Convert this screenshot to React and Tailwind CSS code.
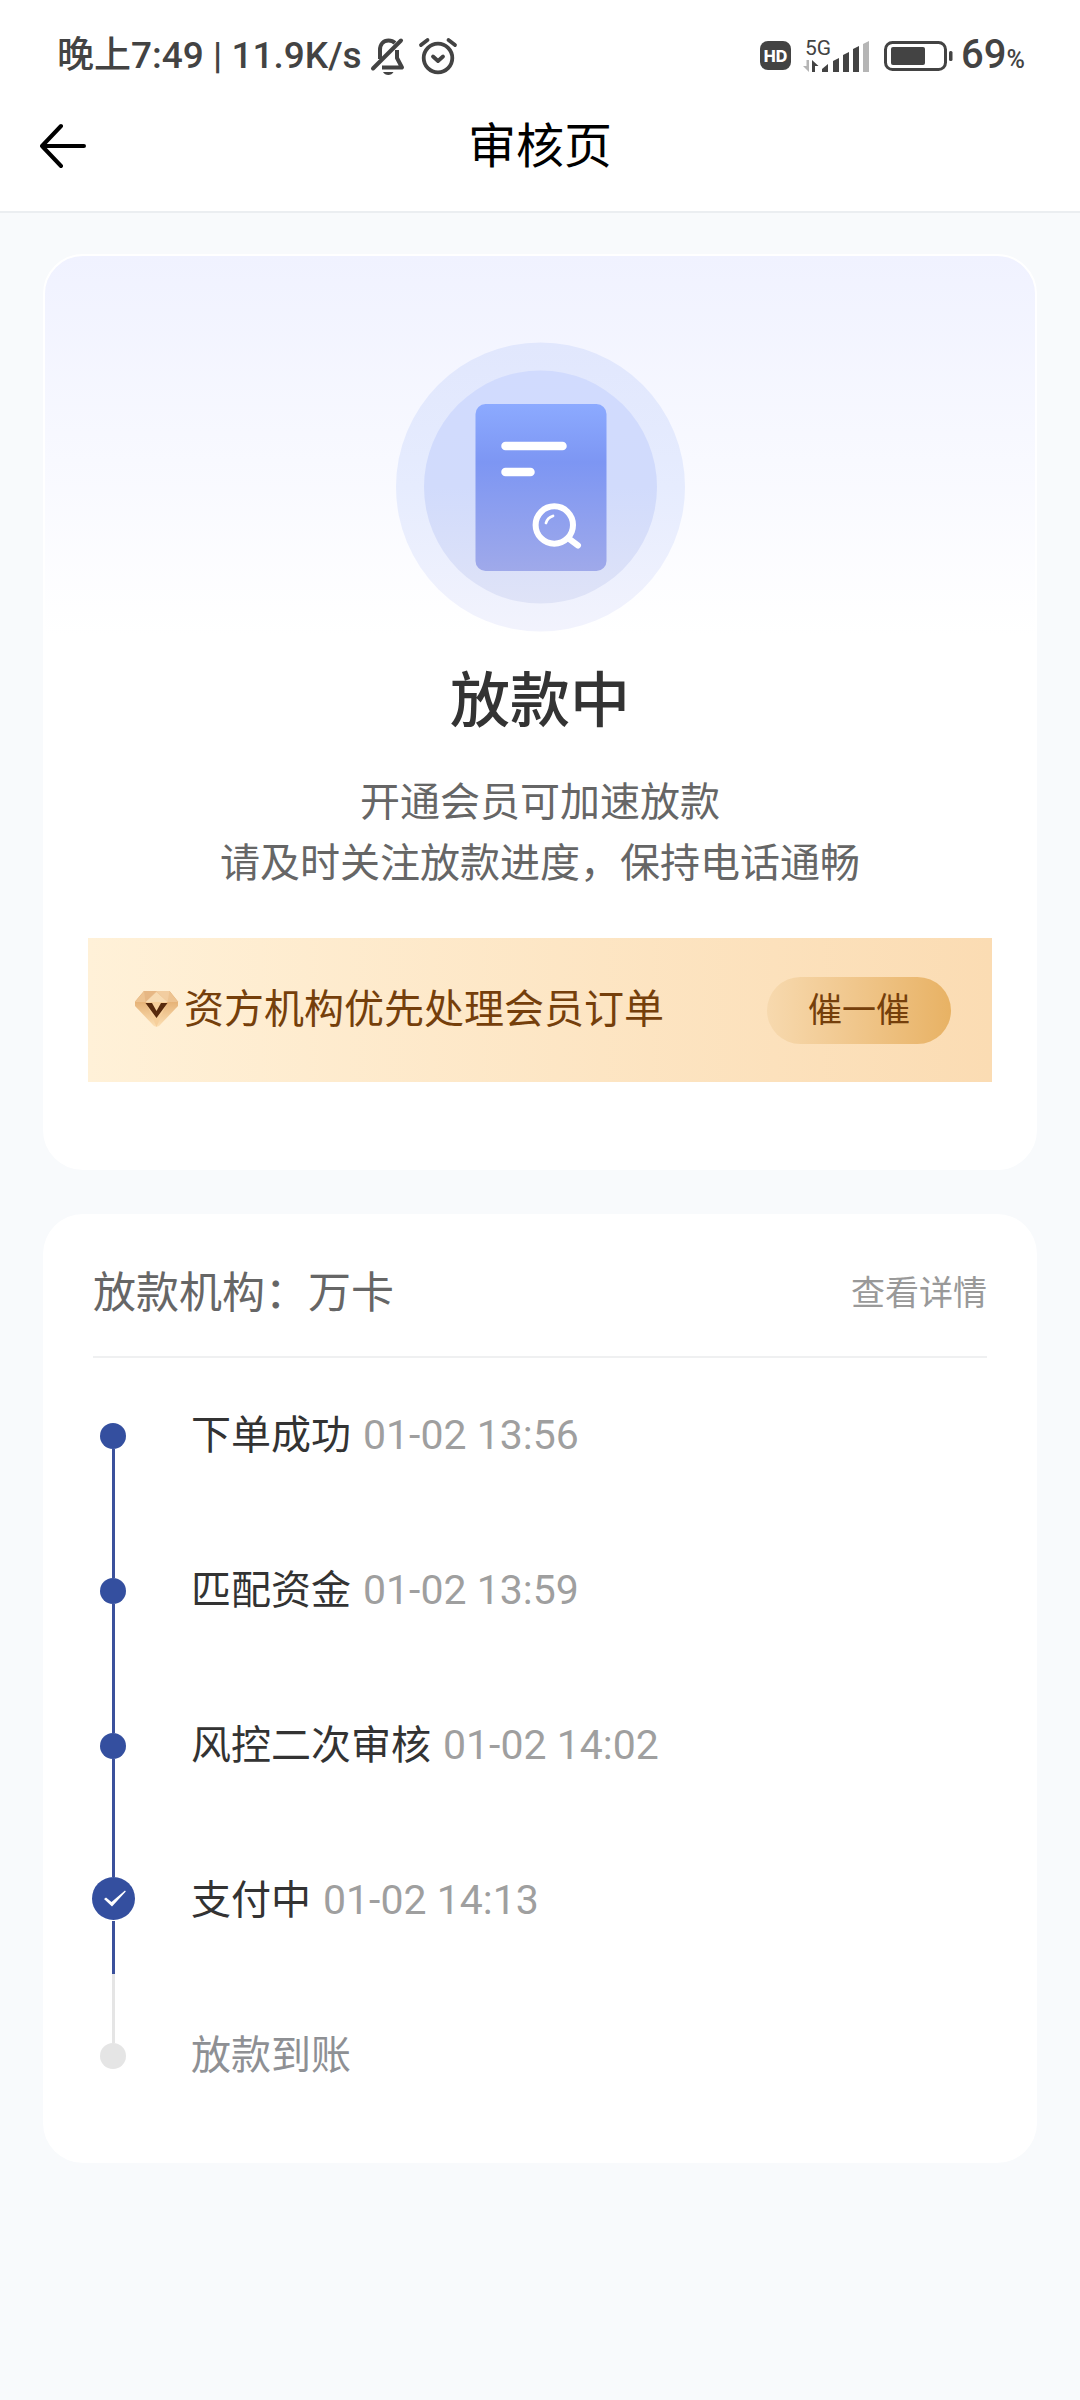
const CJK = 'font-["Roboto","Noto_Sans_CJK_SC",sans-serif]';

function BellOffIcon() {
  return (
    <svg className="h-[38px] w-[36px]" viewBox="0 0 36 38" fill="none" stroke="#434343" aria-hidden="true">
      <path d="M10 22V13c0-6 3.500-9.500 8.500-9.500 3 0 5 1 6.500 2.500" strokeWidth="4" />
      <path d="M3 31.500 31 3.500" strokeWidth="4" strokeLinecap="round" />
      <path d="M27 13v8l5 9.500H12" strokeWidth="4" strokeLinejoin="round" />
      <path d="M13 35h10.500c-1 2-3 3-5.200 3s-4.300-1-5.300-3Z" fill="#434343" stroke="none" />
    </svg>
  );
}

function AlarmIcon() {
  return (
    <svg className="h-[38px] w-[40px]" viewBox="0 0 40 38" fill="none" stroke="#434343" strokeWidth="3.800" aria-hidden="true">
      <circle cx="20" cy="21" r="14.300" />
      <path d="m15 19.500 5 4.500 5-4.500" strokeLinecap="round" strokeLinejoin="round" />
      <path d="M3 8 9.500 3M37 8l-6.500-5" strokeLinecap="round" />
    </svg>
  );
}

function SignalIcon() {
  return (
    <svg className="h-[52px] w-[66px]" viewBox="0 -8 66 52" fill="#434343" aria-hidden="true">
      <text x="2" y="17" fontSize="21" fontFamily="Roboto, sans-serif">5G</text>
      <path d="M3.500 22H6v12L0 28h3.500Z" fill="#b5b5b5" />
      <path d="M9 34V22l6.500 6H12v6Z" />
      <path d="M19 34v-3l6-5v8Z" />
      <path d="M30 34V23l6-3v14Z" />
      <path d="M40 34V17l6-3v20Z" />
      <path d="M50 34V11l6-3v26Z" />
      <path d="M60 34V6l6-3v31Z" fill="#b5b5b5" />
    </svg>
  );
}

function BatteryIcon() {
  return (
    <svg className="h-[30px] w-[69px]" viewBox="0 0 69 30" fill="none" aria-hidden="true">
      <rect x="1.500" y="1.500" width="60" height="27" rx="7" stroke="#434343" strokeWidth="3" />
      <rect x="7" y="6" width="34" height="18" rx="2" fill="#434343" />
      <rect x="65" y="10" width="3.500" height="10" rx="1.500" fill="#434343" />
    </svg>
  );
}

function StatusBar() {
  return (
    <div className="flex h-[111px] items-center justify-between pr-[55px] pl-[57px] text-[#434343]">
      <div className="flex items-center">
        <span className="text-[37px] leading-[44px] font-medium whitespace-pre">晚上7:49 | 11.9K/s</span>
        <span className="ml-2 flex items-center gap-3">
          <BellOffIcon />
          <AlarmIcon />
        </span>
      </div>
      <div className="flex items-center">
        <span className="flex h-[29px] w-[31px] items-center justify-center rounded-lg bg-[#434343] font-[Inter] text-[16px] font-extrabold text-white">HD</span>
        <span className="ml-3 flex items-center gap-[15px]">
          <SignalIcon />
          <BatteryIcon />
        </span>
        <span className="ml-2 flex items-baseline pt-1 text-[40px] leading-[44px] font-medium">
          69<span className="text-[25px]">%</span>
        </span>
      </div>
    </div>
  );
}

function Header() {
  return (
    <header className="border-b-2 border-[#ebeef1] bg-white">
      <StatusBar />
      <div className="grid h-[100px] grid-cols-3 items-start px-10">
        <button type="button" aria-label="返回" className="mt-[11px] w-[48px]">
          <svg className="h-[48px] w-[48px]" viewBox="0 0 48 48" fill="none" stroke="#000" strokeWidth="4" strokeLinecap="round" strokeLinejoin="round" aria-hidden="true">
            <path d="M21 4 2 24l19 20M2 24h42" />
          </svg>
        </button>
        <h1 className="text-center text-[48px] leading-[72px] text-black">审核页</h1>
      </div>
    </header>
  );
}

function ReviewIllustration() {
  return (
    <svg className="h-[290px] w-[290px]" viewBox="0 0 290 290" fill="none" aria-hidden="true">
      <defs>
        <linearGradient id="outer" x1="0" y1="0" x2="0" y2="1">
          <stop offset="0" stopColor="#e1e7fd" />
          <stop offset="0.500" stopColor="#e6ecfe" />
          <stop offset="1" stopColor="#f2f3fd" />
        </linearGradient>
        <linearGradient id="inner" x1="0" y1="0" x2="0" y2="1">
          <stop offset="0" stopColor="#d1dbfe" />
          <stop offset="0.500" stopColor="#d1dbfc" />
          <stop offset="1" stopColor="#dfe3f7" />
        </linearGradient>
        <linearGradient id="sheet" x1="0" y1="0" x2="0" y2="1">
          <stop offset="0" stopColor="#8caaff" />
          <stop offset="0.350" stopColor="#7d96f3" />
          <stop offset="1" stopColor="#9fa9ea" />
        </linearGradient>
      </defs>
      <circle cx="145.500" cy="145" r="144.500" fill="url(#outer)" />
      <circle cx="145.500" cy="145" r="116.500" fill="url(#inner)" />
      <rect x="80.500" y="62" width="131" height="167" rx="10" fill="url(#sheet)" />
      <path d="M110.500 104h57M110.500 130h25" stroke="#fff" strokeWidth="8.500" strokeLinecap="round" />
      <circle cx="159.300" cy="183" r="18.700" stroke="#fff" strokeWidth="6" />
      <path d="m175 197.500 8 6" stroke="#fff" strokeWidth="6" strokeLinecap="round" />
      <path d="M151 181c1-4 4-6 7-7" stroke="#fff" strokeWidth="2.800" strokeLinecap="round" />
    </svg>
  );
}

function DiamondIcon() {
  return (
    <svg className="h-[40px] w-[44px]" viewBox="0 0 44 40" aria-hidden="true">
      <defs>
        <linearGradient id="gem" x1="0" y1="0" x2="0" y2="1">
          <stop offset="0" stopColor="#dc9f5d" />
          <stop offset="1" stopColor="#fcdfb3" />
        </linearGradient>
      </defs>
      <path d="M9 1h25.500L43 11.500V16L24.500 35.500q-3 2.500-6 0L0 16v-4.500Z" fill="url(#gem)" />
      <path d="M11 12h21l-10.500 25Z" fill="#f6cf9b" />
      <path d="M9 1h25.500L43 12H0Z" fill="#edc391" />
      <path d="m21.500 2 11 10h-22Z" fill="#f7dbb3" />
      <path d="M9 1h12.500l-11 11Z" fill="#e6b784" />
      <path d="M21.500 1h13l-2 11Z" fill="#f2cda0" />
      <path d="M10.500 13H17l4.500 8 4.500-8h6.500l-11 15Z" fill="#572a0d" />
    </svg>
  );
}

function StatusCard() {
  return (
    <section className="rounded-[40px] border-2 border-white bg-white bg-linear-to-b from-[#f0f2ff] to-white to-[380px] px-[43px] pt-[86px] pb-[86px]">
      <div className="flex flex-col items-center text-center">
        <ReviewIllustration />
        <h2 className="mt-[26px] text-[60px] leading-[88px] font-medium text-[#333]">放款中</h2>
        <p className="mt-[26px] text-[40px] leading-[61px] text-[#666]">
          开通会员可加速放款
          <br />
          请及时关注放款进度，保持电话通畅
        </p>
      </div>
      <div className="mt-11 flex h-[144px] items-center bg-linear-to-r from-[#fff1d8] to-[#fbdcb3] pr-[41px] pl-[47px]">
        <DiamondIcon />
        <span className="ml-[5px] flex-1 text-[40px] leading-[60px] text-[#753f0b]">资方机构优先处理会员订单</span>
        <button type="button" className="h-[67px] w-[184px] rounded-full bg-linear-to-r from-[#f7d9ae] to-[#e8b264] text-[34px] leading-[50px] text-[#753f0b]">
          催一催
        </button>
      </div>
    </section>
  );
}

const steps = [
  { name: "下单成功", time: "01-02 13:56", state: "done" },
  { name: "匹配资金", time: "01-02 13:59", state: "done" },
  { name: "风控二次审核", time: "01-02 14:02", state: "done" },
  { name: "支付中", time: "01-02 14:13", state: "current" },
  { name: "放款到账", time: "", state: "pending" },
];

const topLine = ["bg-transparent", "bg-[#3b519c]", "bg-[#3b519c]", "bg-[#3b519c]", "bg-[#e5e5e5]"];
const bottomLine = [
  "bg-[#3b519c]",
  "bg-[#3b519c]",
  "bg-[#3b519c]",
  "mt-px border-b-4 border-[#e5e5e5] bg-[#3b519c]",
  "bg-transparent",
];

function Marker({ state }) {
  if (state === "current") {
    return (
      <svg className="h-[43px] w-[43px] shrink-0" viewBox="0 0 43 43" fill="none" aria-hidden="true">
        <circle cx="21.500" cy="21.500" r="21.500" fill="#344f9f" />
        <path d="m12 22 2-1.500 5.500 4.500L33 13.500l.8 1L20 29.500Z" fill="#fff" />
      </svg>
    );
  }
  return <span className={state === "done" ? "h-[26px] w-[26px] rounded-full bg-[#344f9f]" : "h-[26px] w-[26px] rounded-full bg-[#e5e5e5]"} />;
}

function ProgressCard() {
  return (
    <section className="mt-11 rounded-[40px] bg-white px-[50px] pb-[30px]">
      <div className="flex h-[144px] items-center justify-between border-b-2 border-[#eff0f1] pt-[15px]">
        <h2 className="text-[43px] leading-[64px] text-[#666]">放款机构：万卡</h2>
        <a href="#detail" className="text-[34px] leading-[50px] text-[#999]">查看详情</a>
      </div>
      <ol>
        {steps.map((step, i) => (
          <li key={step.name} className="flex h-[155px] items-stretch gap-[58px]">
            <div className="flex w-10 shrink-0 flex-col items-center justify-center">
              <span className={`w-[3px] flex-1 ${topLine[i]}`} />
              <Marker state={step.state} />
              <span className={`w-[3px] flex-1 ${bottomLine[i]}`} />
            </div>
            <p className="self-center text-[40px] leading-[60px]">
              <span className={step.state === "pending" ? "text-[#8e9094]" : "text-[#333]"}>{step.name}</span>
              <span className="ml-3 text-[41px] text-[#9f9f9f]">{step.time}</span>
            </p>
          </li>
        ))}
      </ol>
    </section>
  );
}

export default function App() {
  return (
    <div className={`min-h-screen bg-[#f8fafc] ${CJK}`}>
      <Header />
      <main className="px-[43px] pt-[41px] pb-10">
        <StatusCard />
        <ProgressCard />
      </main>
    </div>
  );
}
